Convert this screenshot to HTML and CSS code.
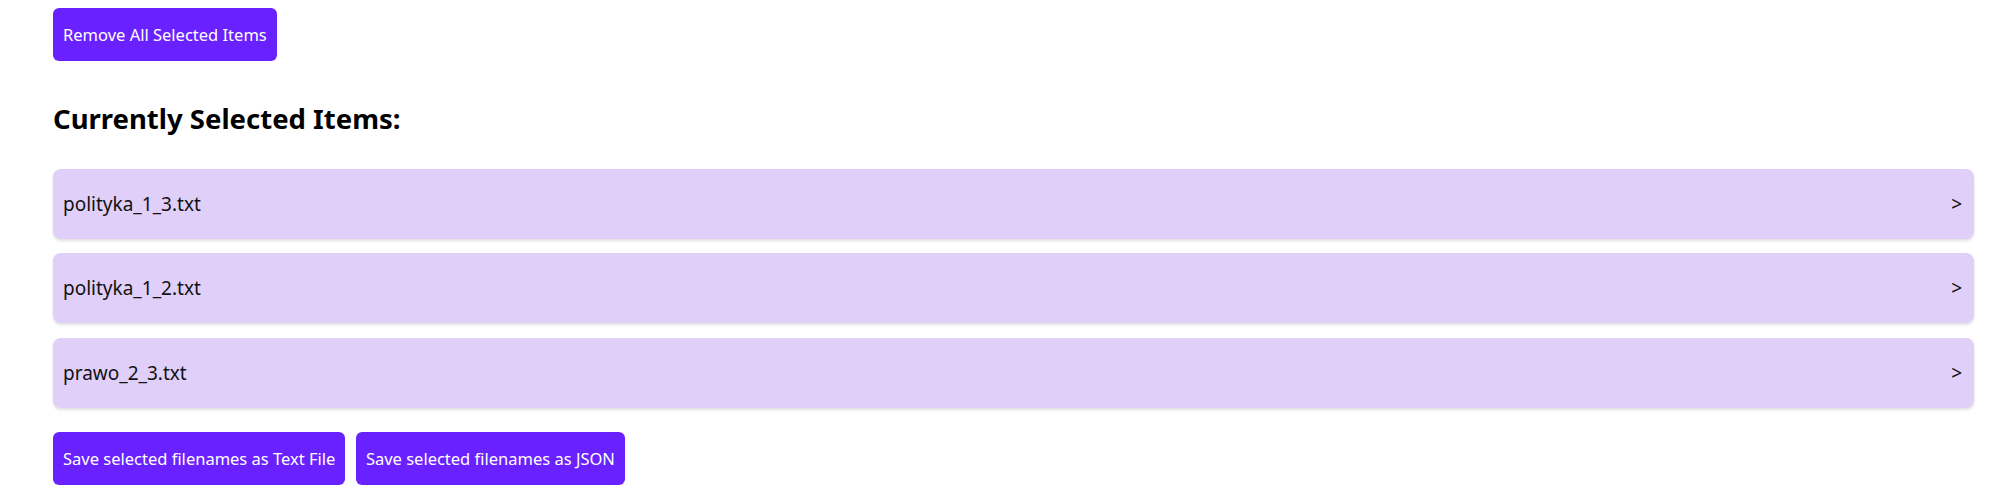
FILE: index.html
```html
<!DOCTYPE html>
<html>
<head>
<meta charset="utf-8">
<title>Selected Items</title>
<link rel="stylesheet" href="styles.css">
</head>
<body>
<main class="page">
  <div class="top-actions">
    <button class="btn">Remove All Selected Items</button>
  </div>
  <h2 class="title">Currently Selected Items:</h2>
  <ul class="items">
    <li class="item"><span class="name">polityka_1_3.txt</span><span class="arrow">&gt;</span></li>
    <li class="item"><span class="name">polityka_1_2.txt</span><span class="arrow">&gt;</span></li>
    <li class="item"><span class="name">prawo_2_3.txt</span><span class="arrow">&gt;</span></li>
  </ul>
  <div class="bottom-actions">
    <button class="btn">Save selected filenames as Text File</button>
    <button class="btn">Save selected filenames as JSON</button>
  </div>
</main>
</body>
</html>
```
FILE: styles.css
```css
html, body {
  margin: 0;
  padding: 0;
  background: #ffffff;
}
body {
  font-family: "Noto Sans", "Open Sans", sans-serif;
  color: #111111;
}
.page {
  padding: 8px 40px 0 53px;
  display: flex;
  flex-direction: column;
}
.top-actions, .bottom-actions {
  display: flex;
  gap: 10.5px;
}
.btn {
  height: 53px;
  padding: 0 10px;
  border: none;
  border-radius: 6px;
  background: #6a21ff;
  color: #ffffff;
  font-family: "Noto Sans", "Open Sans", sans-serif;
  font-size: 16.5px;
  cursor: pointer;
}
.title {
  margin: 42px 0 0 0;
  font-size: 27.5px;
  font-weight: 700;
  color: #000000;
  line-height: 32.7px;
}
.items {
  list-style: none;
  margin: 33px 0 0 0;
  padding: 0;
  display: flex;
  flex-direction: column;
  gap: 14.5px;
}
.item {
  height: 70px;
  box-sizing: border-box;
  padding: 0 12px 0 10px;
  display: flex;
  align-items: center;
  justify-content: space-between;
  background: #e0d0f9;
  border-radius: 8px;
  box-shadow: 0 2px 3px rgba(0, 0, 0, 0.12);
  font-size: 19px;
  color: #111111;
}
.bottom-actions {
  margin-top: 24px;
}
```
